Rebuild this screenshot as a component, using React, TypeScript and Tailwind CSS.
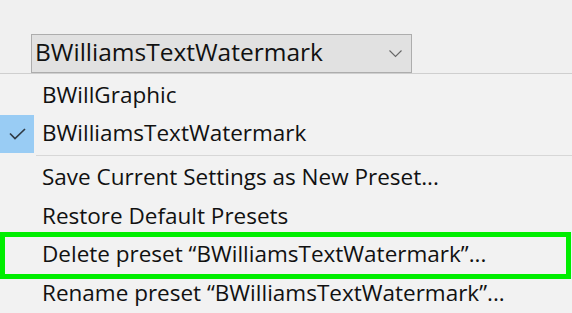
const font = { fontFamily: '"Segoe UI", "Open Sans", "Noto Sans", sans-serif' }

function Check() {
  return (
    <svg width="17" height="12" viewBox="0 0 17 12" fill="none">
      <path d="M1 5.5 L6 10.5 L16 1" stroke="#2f3a44" strokeWidth="1.7" />
    </svg>
  )
}

function Item({ label, checked, h = "h-[38.5px]" }: { label: string; checked?: boolean; h?: string }) {
  return (
    <div className={"flex items-center " + h}>
      <div
        className={
          "flex h-full w-[34px] shrink-0 items-center justify-center " +
          (checked ? "bg-[#99ccf4]" : "")
        }
      >
        {checked && <Check />}
      </div>
      <span className="pb-[2px] pl-[8px] text-[22.5px] leading-none text-[#111]">{label}</span>
    </div>
  )
}

export default function App() {
  return (
    <div className="h-[313px] w-[572px] overflow-hidden bg-[#f0f0f0]" style={font}>
      <div className="h-[34px]" />
      <div className="ml-[31px] flex h-[39px] w-[381px] items-center justify-between border border-[#adadad] bg-[#e1e1e1] pl-[3px] pr-[9px]">
        <span className="pb-[3px] text-[24.5px] leading-none text-[#111]">BWilliamsTextWatermark</span>
        <svg width="13" height="8" viewBox="0 0 13 8" fill="none">
          <path d="M0.5 0.5 L6.5 6.5 L12.5 0.5" stroke="#666" strokeWidth="1.1" />
        </svg>
      </div>
      <div className="border-t border-[#cfcfcf] bg-[#f2f2f2] pt-[3px]">
        <Item label="BWillGraphic" h="h-[38px]" />
        <Item label="BWilliamsTextWatermark" checked h="h-[38px]" />
        <div className="ml-[36px] mt-[2px] border-t border-[#d7d7d7]" />
        <div className="pt-[3px]">
          <Item label="Save Current Settings as New Preset..." />
          <Item label="Restore Default Presets" />
          <div className="relative">
            <Item label="Delete preset “BWilliamsTextWatermark”..." />
            <div className="pointer-events-none absolute -top-[4px] -bottom-[4px] left-0 right-[1px] border-[5px] border-[#00ee00]" />
          </div>
          <Item label="Rename preset “BWilliamsTextWatermark”..." />
        </div>
      </div>
    </div>
  )
}
